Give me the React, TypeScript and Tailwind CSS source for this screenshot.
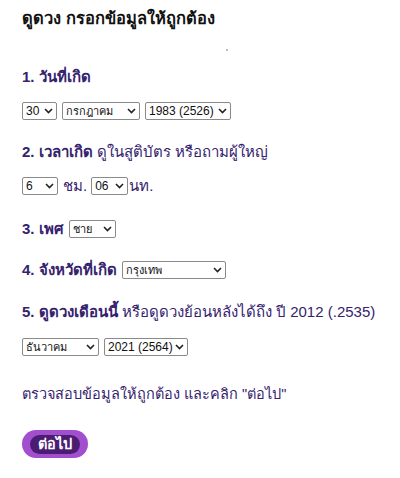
import React from "react";

type SelProps = { value: string; options?: string[]; w: string; small?: boolean };

function Chevron() {
  return (
    <svg width="9" height="6" viewBox="0 0 9 6" className="pointer-events-none absolute right-[4px] top-1/2 -translate-y-1/2">
      <path d="M1 1 L4.5 4.5 L8 1" fill="none" stroke="#222" strokeWidth="1.6" />
    </svg>
  );
}

function Sel({ value, options, w, small }: SelProps) {
  const opts = options ?? [value];
  return (
    <span className={`relative inline-flex h-[18px] ${w}`}>
      <select
        defaultValue={value}
        className={`h-full w-full appearance-none rounded-[2px] border border-[#8a8a8a] bg-white pl-[3px] pr-[13px] leading-[16px] text-[#111] ${small ? "text-[11px]" : "text-[12px]"}`}
      >
        {opts.map((o) => (
          <option key={o}>{o}</option>
        ))}
      </select>
      <Chevron />
    </span>
  );
}

export default function App() {
  return (
    <main
      className="min-h-screen bg-white px-[22px] pt-[8px] text-[#35226e]"
      style={{ fontFamily: '"Liberation Sans", "Noto Sans", sans-serif' }}
    >
      <h1 className="text-[16.5px] font-bold leading-[20px] text-[#111]">ดูดวง กรอกข้อมูลให้ถูกต้อง</h1>

      <div className="mt-[21px] h-[2px] pl-[204px]">
        <span className="block h-[2px] w-[2px] rounded-full bg-[#aaa]"></span>
      </div>

      <h2 className="mt-[16px] text-[15px] font-bold leading-[20px]">1. วันที่เกิด</h2>
      <div className="mt-[15px] flex gap-[5px]">
        <Sel value="30" w="w-[35px]" />
        <Sel value="กรกฎาคม" w="w-[78px]" small />
        <Sel value="1983 (2526)" w="w-[86px]" />
      </div>

      <h2 className="mt-[22px] text-[15px] leading-[20px]">
        <span className="font-bold">2. เวลาเกิด</span> ดูในสูติบัตร หรือถามผู้ใหญ่
      </h2>
      <div className="mt-[14px] flex items-center text-[15px] leading-[20px]">
        <Sel value="6" w="w-[36px]" />
        <span className="ml-[5px] mr-[4px]">ชม.</span>
        <Sel value="06" w="w-[37px]" />
        <span className="ml-[1px]">นท.</span>
      </div>

      <div className="mt-[23px] flex items-center gap-[5px] text-[15px] leading-[20px]">
        <span className="font-bold">3. เพศ</span>
        <Sel value="ชาย" options={["ชาย", "หญิง"]} w="w-[47px]" small />
      </div>

      <div className="mt-[21px] flex items-center gap-[5px] text-[15px] leading-[20px]">
        <span className="font-bold">4. จังหวัดที่เกิด</span>
        <Sel value="กรุงเทพ" w="w-[104px]" small />
      </div>

      <h2 className="mt-[22px] text-[15px] leading-[20px]">
        <span className="font-bold">5. ดูดวงเดือนนี้</span> หรือดูดวงย้อนหลังได้ถึง ปี 2012 (.2535)
      </h2>
      <div className="mt-[16px] flex gap-[5px]">
        <Sel value="ธันวาคม" w="w-[77px]" small />
        <Sel value="2021 (2564)" w="w-[84px]" />
      </div>

      <p className="mt-[28px] text-[14.5px] leading-[20px]">ตรวจสอบข้อมูลให้ถูกต้อง และคลิก "ต่อไป"</p>

      <button className="mt-[26px] inline-flex h-[28px] items-center rounded-full bg-[#a24fcf] px-[8px]">
        <span className="rounded-full bg-[#4a1d72] px-[8px] text-[14.5px] font-bold leading-[19px] text-white">ต่อไป</span>
      </button>
    </main>
  );
}
